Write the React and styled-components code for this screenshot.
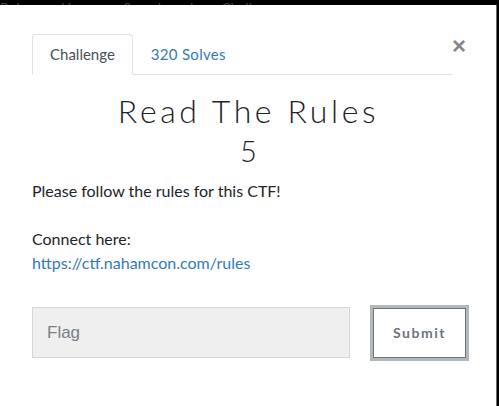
import React from 'react'
import styled, { createGlobalStyle } from 'styled-components'

const Global = createGlobalStyle`
  html, body { margin: 0; padding: 0; background: #000; }
  body { font-family: Lato, "Open Sans", sans-serif; }
`

const Page = styled.div`
  width: 499px;
  height: 406px;
  overflow: hidden;
  background: #000;
  display: flex;
  flex-direction: column;
`

const NavPeek = styled.div`
  height: 5px;
  overflow: hidden;
  display: flex;
  align-items: flex-end;
  gap: 28px;
  color: #444;
  font-size: 14px;
  line-height: 14px;
  white-space: nowrap;
  span { display: block; margin-bottom: -10px; }
`

const Modal = styled.div`
  flex: 1;
  width: 497px;
  background: #fff;
  border-right: 1px solid #6a6a6a;
  padding: 29px 0 0 32px;
  box-sizing: border-box;
  position: relative;
`

const Close = styled.button`
  position: absolute;
  top: 29px;
  left: 452px;
  border: none;
  background: none;
  padding: 0;
  font-family: "Liberation Sans", Arial, sans-serif;
  font-size: 24px;
  font-weight: 700;
  line-height: 24px;
  color: #888;
  cursor: pointer;
`

const Tabs = styled.ul`
  list-style: none;
  margin: 0;
  padding: 0;
  width: 420px;
  display: flex;
  border-bottom: 1px solid #dee2e6;
`

const Tab = styled.li`
  margin-bottom: -1px;
  padding: 7px 17px 8px;
  font-size: 15px;
  line-height: 24px;
  letter-spacing: ${p => (p.$active ? '0' : '0.3px')};
  border: 1px solid ${p => (p.$active ? '#dee2e6' : 'transparent')};
  border-bottom-color: ${p => (p.$active ? '#fff' : 'transparent')};
  border-radius: 4px 4px 0 0;
  color: ${p => (p.$active ? '#495057' : '#337ab7')};
  background: ${p => (p.$active ? '#fff' : 'transparent')};
`

const Title = styled.h2`
  margin: 18px 0 0 -32px;
  width: 497px;
  text-align: center;
  font-family: Lato, sans-serif;
  font-weight: 300;
  font-size: 32px;
  letter-spacing: 3.6px;
  line-height: 36px;
  color: #1e2226;
`

const Points = styled.div`
  margin: 5px 0 0 -32px;
  width: 497px;
  text-align: center;
  font-family: Lato, sans-serif;
  font-weight: 300;
  font-size: 29px;
  line-height: 34px;
  color: #1e2226;
`

const Desc = styled.p`
  margin: ${p => (p.$gap ? '24px' : '11px')} 0 0;
  font-size: 16px;
  line-height: 24px;
  color: #212529;
`

const Link = styled.a`
  color: #337ab7;
  text-decoration: none;
`

const FlagRow = styled.form`
  display: flex;
  align-items: center;
  margin-top: 32px;
`

const FlagInput = styled.input`
  width: 318px;
  height: 51px;
  box-sizing: border-box;
  background: #efefef;
  border: 1px solid #d3d7db;
  padding: 0 14px;
  font-family: "Liberation Sans", Arial, sans-serif;
  font-size: 17px;
  color: #495057;
  &::placeholder { color: #7a7f84; }
`

const SubmitButton = styled.button`
  margin-left: 23px;
  width: 93px;
  height: 50px;
  box-sizing: border-box;
  background: #fff;
  border: 1px solid #6c757d;
  outline: 3px solid #b3b8bd;
  font-family: Lato, sans-serif;
  font-weight: 700;
  font-size: 14px;
  letter-spacing: 1.5px;
  color: #6c757d;
`

export default function App() {
  return (
    <Page>
      <Global />
      <NavPeek>
        <span>Rules</span>
        <span>Users</span>
        <span>Scoreboard</span>
        <span>Challenges</span>
      </NavPeek>
      <Modal>
        <Close aria-label="Close">×</Close>
        <Tabs>
          <Tab $active>Challenge</Tab>
          <Tab>320 Solves</Tab>
        </Tabs>
        <Title>Read The Rules</Title>
        <Points>5</Points>
        <Desc>Please follow the rules for this CTF!</Desc>
        <Desc $gap>
          Connect here:
          <br />
          <Link href="#">https://ctf.nahamcon.com/rules</Link>
        </Desc>
        <FlagRow onSubmit={e => e.preventDefault()}>
          <FlagInput placeholder="Flag" />
          <SubmitButton type="submit">Submit</SubmitButton>
        </FlagRow>
      </Modal>
    </Page>
  )
}
